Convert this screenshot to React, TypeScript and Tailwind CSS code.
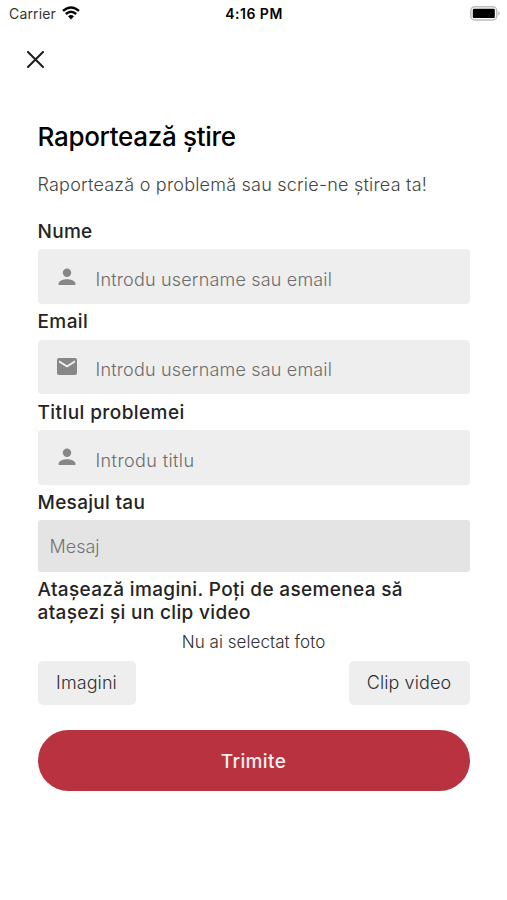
import React from 'react';

function PersonIcon() {
  return (
    <svg viewBox="0 0 18 18" className="h-[18px] w-[18px]" fill="#878787">
      <circle cx="9" cy="4.7" r="4.2" />
      <path d="M.6 17v-1.6c0-2.7 5.2-4.2 8.4-4.2s8.4 1.5 8.4 4.2V17z" />
    </svg>
  );
}

function MailIcon() {
  return (
    <svg viewBox="0 0 20 17" className="h-[17px] w-5" fill="#878787">
      <path d="M2 0h16a2 2 0 0 1 2 2v13a2 2 0 0 1-2 2H2a2 2 0 0 1-2-2V2a2 2 0 0 1 2-2zm0 2.2v2.2l8 5.1 8-5.1V2.2l-8 5.1z" />
    </svg>
  );
}

function Field({ label, tracking, hint, hintTracking, icon }: {
  label: string; tracking: string; hint: string; hintTracking: string; icon: React.ReactNode;
}) {
  return (
    <div className="h-[90.4px]">
      <div className={`flex h-[29px] items-center pb-[5px] text-[19px] font-medium text-[#242424] ${tracking}`}>{label}</div>
      <div className="flex h-[54.5px] items-center rounded bg-[#eeeeee]">
        <div className="ml-[19px] flex w-5 justify-center">{icon}</div>
        <div className={`ml-[19px] pt-[6px] text-[18px] font-light text-[#6c6c6c] ${hintTracking}`}>{hint}</div>
      </div>
    </div>
  );
}

export default function App() {
  return (
    <main className="h-[900px] w-[507px] overflow-hidden bg-white font-['Inter','Liberation_Sans',sans-serif]">
      <header className="grid h-7 grid-cols-3 items-center pl-[9px] pr-[7px] text-[14px]">
        <div className="flex items-center gap-[6px] pb-[2px] text-[#333333]">
          <span className="tracking-[0.15px]">Carrier</span>
          <svg viewBox="0 0 18 14" className="-mt-px h-[14px] w-[18px]" fill="none" stroke="#050505" strokeWidth="2.5">
            <path d="M1 4.9Q9-2 17 4.9M3.8 8Q9 3.6 14.2 8" />
            <path d="M6 10.3Q9 7.9 12 10.3L9 13.5z" fill="#050505" stroke="none" />
          </svg>
        </div>
        <span className="-ml-px whitespace-nowrap pb-[2px] text-center font-semibold text-black tracking-[0.5px]">4:16 PM</span>
        <svg viewBox="0 0 30 15" className="-mt-[2px] h-[15px] w-[30px] justify-self-end">
          <rect x=".8" y=".8" width="26" height="13.2" rx="4" fill="#fff" stroke="#bdbdbd" strokeWidth="1.5" />
          <rect x="2.8" y="2.7" width="22" height="9.4" rx="1.2" fill="#000" />
          <path d="M28.3 5.2q1.6.4 1.6 2.2t-1.6 2.2z" fill="#bdbdbd" />
        </svg>
      </header>

      <div className="flex h-[64px] items-center pb-px pl-[26.5px]">
        <svg viewBox="0 0 17 17" className="h-[17px] w-[17px]" stroke="#1c1c1c" strokeWidth="2" strokeLinecap="round">
          <path d="M1 1l15 15M16 1L1 16" />
        </svg>
      </div>

      <section className="mx-auto mt-[25px] w-[432px]">
        <h1 className="flex h-10 items-center whitespace-nowrap pb-px text-[26px] font-medium tracking-[-0.3px] text-black">Raportează știre</h1>
        <p className="mt-[14px] flex h-[26px] items-center whitespace-nowrap text-[18px] font-light tracking-[0.21px] text-[#444444]">Raportează o problemă sau scrie-ne știrea ta!</p>

        <div className="mt-[23.3px]">
          <Field label="Nume" tracking="tracking-[0.3px]" hint="Introdu username sau email" hintTracking="tracking-[0.18px]" icon={<PersonIcon />} />
          <Field label="Email" tracking="tracking-[0.4px]" hint="Introdu username sau email" hintTracking="tracking-[0.18px]" icon={<MailIcon />} />
          <Field label="Titlul problemei" tracking="tracking-[0.42px]" hint="Introdu titlu" hintTracking="tracking-[0.4px]" icon={<PersonIcon />} />
        </div>
        <div className="flex h-[29px] items-center pb-[5px] text-[19px] font-medium tracking-[0.3px] text-[#242424]">Mesajul tau</div>
        <div className="flex h-[51.5px] items-center rounded-[3px] bg-[#e4e4e4] pl-3 text-[18px] font-light text-[#747474]">Mesaj</div>
        <div className="mt-[6px] h-[46px] whitespace-nowrap text-[19px] leading-[23px] font-medium tracking-[0.34px] text-[#242424]">
          Atașează imagini. Poți de asemenea să<br />atașezi și un clip video
        </div>
        <p className="mt-[6px] h-6 text-center text-[17px] leading-6 font-light tracking-[0.05px] text-[#303030]">Nu ai selectat foto</p>
        <div className="mt-[7px] flex h-[44px] justify-between text-[18px] font-light text-[#303030]">
          <button className="h-[44px] w-[98px] rounded-[5px] bg-[#eeeeee] tracking-[0.1px]">Imagini</button>
          <button className="h-[44px] w-[121px] rounded-[5px] bg-[#eeeeee] tracking-[0.1px]">Clip video</button>
        </div>
        <button className="mt-[25.5px] h-[61px] w-full rounded-full bg-[#b83240] pt-[3px] text-[19px] font-medium tracking-[0.4px] text-[#fff0f0]">Trimite</button>
      </section>
    </main>
  );
}
